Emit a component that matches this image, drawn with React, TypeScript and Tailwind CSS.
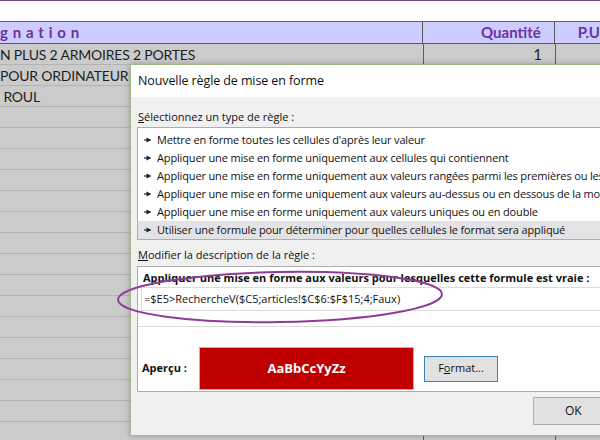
const listItems = [
  "Mettre en forme toutes les cellules d'après leur valeur",
  "Appliquer une mise en forme uniquement aux cellules qui contiennent",
  "Appliquer une mise en forme uniquement aux valeurs rangées parmi les premières ou les dernières valeurs",
  "Appliquer une mise en forme uniquement aux valeurs au-dessus ou en dessous de la moyenne",
  "Appliquer une mise en forme uniquement aux valeurs uniques ou en double",
  "Utiliser une formule pour déterminer pour quelles cellules le format sera appliqué",
];

const rows = [
  { label: "N PLUS 2 ARMOIRES 2 PORTES", qty: "1" },
  { label: "POUR ORDINATEUR", qty: "" },
  { label: "\u00a0ROUL", qty: "" },
  ...Array.from({ length: 16 }, () => ({ label: "", qty: "" })),
];

function Pointer() {
  return (
    <svg width="8" height="6" viewBox="0 0 8 6" className="shrink-0">
      <path d="M0 3h3" stroke="#222" strokeWidth="1.2" />
      <path d="M2.5 0.5L7.5 3L2.5 5.5Z" fill="#222" />
    </svg>
  );
}

export default function App() {
  return (
    <div className="relative w-[600px] h-[440px] overflow-hidden bg-[#cbcbcb] font-['Lato',sans-serif] text-[#1e1e1e]">
      {/* Feuille de calcul */}
      <div className="h-px bg-[#6e4b8c]" />
      <div className="h-[20px] bg-white" />
      <div className="flex h-[23px] border-t border-b border-t-[#6e4b8c] border-b-[#3f6b63] bg-[#ccccff] text-[15px] font-bold text-[#7030a0]">
        <div className="w-[424px] border-r border-[#5a5a5a] flex items-center tracking-[4.8px]">gnation</div>
        <div className="w-[132px] border-r border-[#5a5a5a] flex items-center justify-end pr-[13px]">Quantité</div>
        <div className="flex-1 flex items-center pl-[23px]">P.U</div>
      </div>
      {rows.map((r, i) => (
        <div key={i} className="flex h-[21px] border-b border-[#b3b3b3] text-[14px]">
          <div className="w-[424px] border-r border-[#5e5e5e] flex items-center whitespace-nowrap tracking-[-0.2px]">{r.label}</div>
          <div className="w-[132px] border-r border-[#5e5e5e] flex items-center justify-end pr-[13px] text-[15px]">{r.qty}</div>
          <div className="flex-1" />
        </div>
      ))}

      {/* Boîte de dialogue */}
      <div className="absolute left-[130px] top-[64px] w-[500px] h-[372px] border border-[#a3b887] bg-[#f0f0f0] shadow-[0_0_6px_rgba(0,0,0,0.25)] font-['Segoe_UI','Open_Sans',sans-serif] text-[11px] tracking-[-0.15px] text-[#111]">
        <div className="h-[32px] bg-white flex items-center pl-[7px] text-[12.5px] tracking-[-0.1px]">Nouvelle règle de mise en forme</div>
        <div className="pl-[6px] pt-[12px]">
          <div className="pl-px leading-[16px] tracking-normal">
            <span className="underline">S</span>électionnez un type de règle :
          </div>
          <div className="mt-[2px] border border-[#adadad] bg-white pt-[3px]">
            {listItems.map((t, i) => (
              <div
                key={i}
                className={`h-[18px] flex items-center gap-[5px] pl-[6px] whitespace-nowrap ${i === 5 ? "bg-[#e3e3e6]" : ""}`}
              >
                <Pointer />
                <span>{t}</span>
              </div>
            ))}
          </div>
          <div className="mt-[7px] pl-px leading-[16px] tracking-normal">
            <span className="underline">M</span>odifier la description de la règle :
          </div>
          <div className="mt-[3px] border border-[#adadad] bg-white pt-[3px] pb-px">
            <div className="pl-[5px] leading-[16px] font-bold whitespace-nowrap tracking-normal">
              Appliquer une mise en forme aux valeurs pour lesquelles cette formule est vraie :
            </div>
            <div className="mt-px ml-[3px] h-[24px] border border-[#dcdcdc] flex items-center pl-[2px] tracking-normal">
              =$E5&gt;RechercheV($C5;articles!$C$6:$F$15;4;Faux)
            </div>
            <div className="h-[16px] border-b border-[#dcdcdc]" />
            <div className="mt-[20px] flex items-center">
              <div className="w-[61px] pl-[4px] font-bold tracking-normal">Aperçu :</div>
              <div className="w-[215px] h-[43px] bg-[#c00000] border border-[#e2a0a0] flex items-center justify-center text-white font-bold text-[13px] tracking-normal">
                AaBbCcYyZz
              </div>
              <div className="ml-[10px] w-[74px] h-[26px] border border-[#3c7fb1] bg-[#e1e1e1] flex items-center justify-center tracking-normal">
                F<span className="underline">o</span>rmat...
              </div>
            </div>
          </div>
          <div className="mt-[5px] ml-[396px] w-[90px] h-[28px] border border-[#adadad] bg-[#e1e1e1] flex items-center pl-[31px] text-[12px] tracking-normal">
            OK
          </div>
        </div>
      </div>

      {/* Ellipse de mise en évidence */}
      <svg className="absolute left-0 top-0 pointer-events-none" width="600" height="440">
        <ellipse cx="280" cy="297" rx="162" ry="25" fill="none" stroke="#8e3c98" strokeWidth="2" transform="rotate(-1 280 297)" />
      </svg>
    </div>
  );
}
